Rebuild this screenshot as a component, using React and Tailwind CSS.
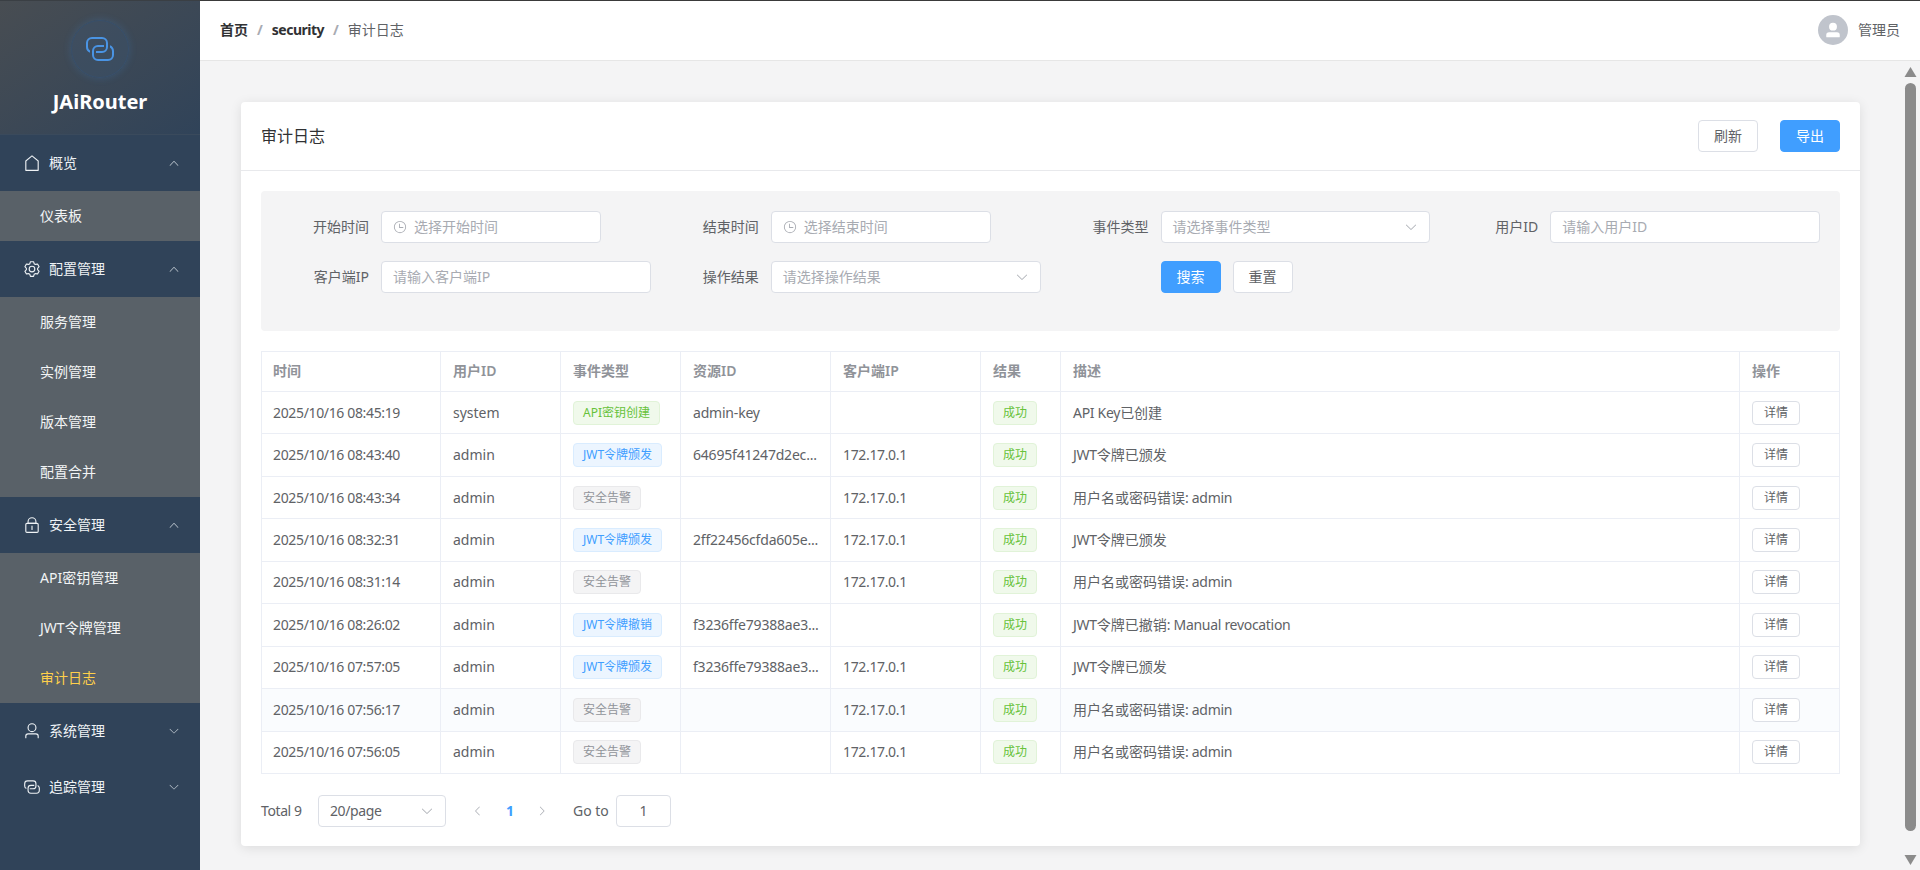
const icons = {
  house: ["M192 413.952V896h640V413.952L512 147.328zM139.52 374.4l352-293.312a32 32 0 0 1 40.96 0l352 293.312A32 32 0 0 1 896 398.976V928a32 32 0 0 1-32 32H160a32 32 0 0 1-32-32V398.976a32 32 0 0 1 11.52-24.576"],
  setting: ["M600.704 64a32 32 0 0 1 30.464 22.208l35.2 109.376c14.784 7.232 28.928 15.36 42.432 24.512l112.384-24.192a32 32 0 0 1 34.432 15.36L944.32 364.8a32 32 0 0 1-4.032 37.504l-77.12 85.12a357 357 0 0 1 0 49.024l77.12 85.248a32 32 0 0 1 4.032 37.504l-88.704 153.6a32 32 0 0 1-34.432 15.296L708.8 803.904c-13.44 9.088-27.648 17.28-42.368 24.512l-35.264 109.376A32 32 0 0 1 600.704 960H423.296a32 32 0 0 1-30.464-22.208L357.696 828.48a352 352 0 0 1-42.56-24.64l-112.32 24.256a32 32 0 0 1-34.432-15.36L79.68 659.2a32 32 0 0 1 4.032-37.504l77.12-85.248a357 357 0 0 1 0-48.896l-77.12-85.248A32 32 0 0 1 79.68 364.8l88.704-153.6a32 32 0 0 1 34.432-15.296l112.32 24.256c13.568-9.152 27.776-17.408 42.56-24.64l35.2-109.312A32 32 0 0 1 423.232 64H600.64zm-23.424 64H446.72l-36.352 113.088-24.512 11.968a294 294 0 0 0-34.816 20.096l-22.656 15.36-116.224-25.088-65.28 113.152 79.68 88.192-1.92 27.136a293 293 0 0 0 0 40.192l1.92 27.136-79.808 88.192 65.344 113.152 116.224-25.024 22.656 15.296a294 294 0 0 0 34.816 20.096l24.512 11.968L446.72 896h130.688l36.48-113.152 24.448-11.904a288 288 0 0 0 34.752-20.096l22.592-15.296 116.288 25.024 65.28-113.152-79.744-88.192 1.92-27.136a293 293 0 0 0 0-40.256l-1.92-27.136 79.808-88.128-65.344-113.152-116.288 24.96-22.592-15.232a288 288 0 0 0-34.752-20.096l-24.448-11.904L577.344 128zM512 320a192 192 0 1 1 0 384 192 192 0 0 1 0-384m0 64a128 128 0 1 0 0 256 128 128 0 0 0 0-256"],
  lock: [
    "M224 448a32 32 0 0 0-32 32v384a32 32 0 0 0 32 32h576a32 32 0 0 0 32-32V480a32 32 0 0 0-32-32zm0-64h576a96 96 0 0 1 96 96v384a96 96 0 0 1-96 96H224a96 96 0 0 1-96-96V480a96 96 0 0 1 96-96",
    "M512 544a32 32 0 0 1 32 32v192a32 32 0 1 1-64 0V576a32 32 0 0 1 32-32m192-160v-64a192 192 0 1 0-384 0v64zM512 64a256 256 0 0 1 256 256v128H256V320A256 256 0 0 1 512 64",
  ],
  user: ["M512 512a192 192 0 1 0 0-384 192 192 0 0 0 0 384m0 64a256 256 0 1 1 0-512 256 256 0 0 1 0 512m320 320v-96a96 96 0 0 0-96-96H288a96 96 0 0 0-96 96v96a32 32 0 1 1-64 0v-96a160 160 0 0 1 160-160h448a160 160 0 0 1 160 160v96a32 32 0 1 1-64 0"],
  userFilled: ["M288 320a224 224 0 1 0 448 0 224 224 0 1 0-448 0m544 608H160a32 32 0 0 1-32-32v-96a160 160 0 0 1 160-160h448a160 160 0 0 1 160 160v96a32 32 0 0 1-32 32z"],
  connection: [
    "M640 384v64H448a128 128 0 0 0-128 128v128a128 128 0 0 0 128 128h320a128 128 0 0 0 128-128V576a128 128 0 0 0-64-110.848V394.88c74.56 26.368 128 97.472 128 181.056v128a192 192 0 0 1-192 192H448a192 192 0 0 1-192-192V576a192 192 0 0 1 192-192z",
    "M384 640v-64h192a128 128 0 0 0 128-128V320a128 128 0 0 0-128-128H256a128 128 0 0 0-128 128v128a128 128 0 0 0 64 110.848v70.272A192.064 192.064 0 0 1 64 448V320a192 192 0 0 1 192-192h320a192 192 0 0 1 192 192v128a192 192 0 0 1-192 192z",
  ],
  clock: [
    "M512 896a384 384 0 1 0 0-768 384 384 0 0 0 0 768m0 64a448 448 0 1 1 0-896 448 448 0 0 1 0 896",
    "M480 256a32 32 0 0 1 32 32v256a32 32 0 0 1-64 0V288a32 32 0 0 1 32-32",
    "M480 512h256q32 0 32 32t-32 32H480q-32 0-32-32t32-32",
  ],
  arrowDown: ["M831.872 340.864 512 652.672 192.128 340.864a30.59 30.59 0 0 0-42.752 0 29.12 29.12 0 0 0 0 41.6L489.664 714.24a32 32 0 0 0 44.672 0l340.288-331.712a29.12 29.12 0 0 0 0-41.728 30.59 30.59 0 0 0-42.752 0z"],
  arrowUp: ["m488.832 344.32-339.84 356.672a32 32 0 0 0 0 44.16l.384.384a29.44 29.44 0 0 0 42.688 0l320-335.872 319.872 335.872a29.44 29.44 0 0 0 42.688 0l.384-.384a32 32 0 0 0 0-44.16L535.168 344.32a32 32 0 0 0-46.336 0"],
  arrowLeft: ["M609.408 149.376 277.76 489.6a32 32 0 0 0 0 44.672l331.648 340.352a29.12 29.12 0 0 0 41.728 0 30.59 30.59 0 0 0 0-42.752L339.264 511.936l311.872-319.872a30.59 30.59 0 0 0 0-42.688 29.12 29.12 0 0 0-41.728 0z"],
  arrowRight: ["M340.864 149.312a30.59 30.59 0 0 0 0 42.752L652.736 512 340.864 831.872a30.59 30.59 0 0 0 0 42.688 29.12 29.12 0 0 0 41.728 0L714.24 534.336a32 32 0 0 0 0-44.672L382.592 149.376a29.12 29.12 0 0 0-41.728 0z"],
};

const Icon = ({ name, className }) => (
  <svg viewBox="0 0 1024 1024" fill="currentColor" className={className}>
    {icons[name].map((d) => (
      <path key={d} d={d} />
    ))}
  </svg>
);

const menu = [
  { icon: "house", label: "概览", open: true, items: ["仪表板"] },
  { icon: "setting", label: "配置管理", open: true, items: ["服务管理", "实例管理", "版本管理", "配置合并"] },
  { icon: "lock", label: "安全管理", open: true, items: ["API密钥管理", "JWT令牌管理", "审计日志"] },
  { icon: "user", label: "系统管理", open: false, items: [] },
  { icon: "connection", label: "追踪管理", open: false, items: [] },
];

const tagStyles = {
  green: "bg-[#f0f9eb] border-[#e1f3d8] text-[#67c23a]",
  blue: "bg-[#ecf5ff] border-[#d9ecff] text-[#409eff]",
  gray: "bg-[#f4f4f5] border-[#e9e9eb] text-[#909399]",
};

const logs = [
  { time: "2025/10/16 08:45:19", user: "system", tag: "API密钥创建", color: "green", res: "admin-key", ip: "", desc: "API Key已创建" },
  { time: "2025/10/16 08:43:40", user: "admin", tag: "JWT令牌颁发", color: "blue", res: "64695f41247d2ec...", ip: "172.17.0.1", desc: "JWT令牌已颁发" },
  { time: "2025/10/16 08:43:34", user: "admin", tag: "安全告警", color: "gray", res: "", ip: "172.17.0.1", desc: "用户名或密码错误: admin" },
  { time: "2025/10/16 08:32:31", user: "admin", tag: "JWT令牌颁发", color: "blue", res: "2ff22456cfda605e...", ip: "172.17.0.1", desc: "JWT令牌已颁发" },
  { time: "2025/10/16 08:31:14", user: "admin", tag: "安全告警", color: "gray", res: "", ip: "172.17.0.1", desc: "用户名或密码错误: admin" },
  { time: "2025/10/16 08:26:02", user: "admin", tag: "JWT令牌撤销", color: "blue", res: "f3236ffe79388ae3...", ip: "", desc: "JWT令牌已撤销: Manual revocation" },
  { time: "2025/10/16 07:57:05", user: "admin", tag: "JWT令牌颁发", color: "blue", res: "f3236ffe79388ae3...", ip: "172.17.0.1", desc: "JWT令牌已颁发" },
  { time: "2025/10/16 07:56:17", user: "admin", tag: "安全告警", color: "gray", res: "", ip: "172.17.0.1", desc: "用户名或密码错误: admin", hover: true },
  { time: "2025/10/16 07:56:05", user: "admin", tag: "安全告警", color: "gray", res: "", ip: "172.17.0.1", desc: "用户名或密码错误: admin" },
];

const headers = ["时间", "用户ID", "事件类型", "资源ID", "客户端IP", "结果", "描述", "操作"];

// latin runs come out wider than in the reference, so only those get tightened
const Desc = ({ text }) =>
  text.split(/([\u4e00-\u9fff]+)/).map((part, i) =>
    i % 2 ? (
      <span key={i}>{part}</span>
    ) : (
      <span key={i} className="tracking-[-0.3px]">
        {part}
      </span>
    )
  );

const Tag = ({ color, children }) => (
  <span className={`inline-flex h-6 items-center rounded border px-[9px] text-xs align-middle ${tagStyles[color]}`}>{children}</span>
);

const Sidebar = () => (
  <aside className="flex w-[200px] shrink-0 flex-col bg-[#304359]">
    <div className="flex h-[135px] shrink-0 flex-col items-center border-b border-[#3a4a5c] bg-gradient-to-br from-[#484d52] to-[#304359] pt-[20px] shadow-[inset_0_1px_0_#3a3f44]">
      <div className="flex h-[58px] w-[58px] items-center justify-center rounded-full border border-[#38506c] bg-[#3a5a7e]/25 shadow-[0_0_8px_rgba(64,158,255,0.18)]">
        <Icon name="connection" className="h-8 w-8 text-[#4a94e4]" />
      </div>
      <div className="mt-[9px] text-xl leading-[30px] font-bold text-white">JAiRouter</div>
    </div>
    {menu.map((group) => (
      <div key={group.label}>
        <div className="flex h-14 items-center pr-5 pl-[23px] text-sm text-[#eef2f5]">
          <Icon name={group.icon} className="h-[18px] w-[18px]" />
          <span className="ml-2 flex-1">{group.label}</span>
          <Icon name={group.open ? "arrowUp" : "arrowDown"} className="h-3 w-3 text-[#bfc8d0]" />
        </div>
        {group.items.map((item) => (
          <div
            key={item}
            className={`flex h-[50px] items-center bg-[#596168] pl-10 text-sm ${item === "审计日志" ? "text-[#ffd04b]" : "text-[#f2f4f5]"}`}
          >
            {item}
          </div>
        ))}
      </div>
    ))}
  </aside>
);

const Header = () => (
  <header className="flex h-[61px] shrink-0 items-center justify-between border-b border-[#e6e6e6] bg-white px-5 text-sm shadow-[inset_0_1px_0_#3a3a3a]">
    <div className="flex items-center">
      <span className="font-bold text-[#303133]">首页</span>
      <span className="mx-[9px] font-bold text-[#a8abb2]">/</span>
      <span className="font-bold tracking-[-0.5px] text-[#303133]">security</span>
      <span className="mx-[9px] font-bold text-[#a8abb2]">/</span>
      <span className="text-[#606266]">审计日志</span>
    </div>
    <div className="flex items-center text-[#606266]">
      <div className="flex h-[30px] w-[30px] items-center justify-center rounded-full bg-[#c0c4cc] text-white">
        <Icon name="userFilled" className="h-[18px] w-[18px]" />
      </div>
      <span className="ml-[10px] text-sm">管理员</span>
    </div>
  </header>
);

const FormItem = ({ label, children }) => (
  <div className="flex h-8 items-center">
    <label className="w-[100px] shrink-0 pr-3 text-right text-sm text-[#606266]">{label}</label>
    {children}
  </div>
);

const Input = ({ placeholder, width = "w-full", icon, select }) => (
  <div className={`flex h-8 items-center rounded border border-[#dcdfe6] bg-white px-[11px] text-sm text-[#a8abb2] ${width}`}>
    {icon && <Icon name="clock" className="mr-[7px] h-[14px] w-[14px] text-[#a8abb2]" />}
    <span className="flex-1">{placeholder}</span>
    {select && <Icon name="arrowDown" className="h-[14px] w-[14px] text-[#a8abb2]" />}
  </div>
);

const Btn = ({ primary, children }) => (
  <button
    className={`h-8 w-[60px] rounded border text-sm ${primary ? "border-[#409eff] bg-[#409eff] text-white" : "border-[#dcdfe6] bg-white text-[#606266]"}`}
  >
    {children}
  </button>
);

const Filters = () => (
  <div className="rounded bg-[#f4f4f5] p-5 pb-[38px]">
    <div className="grid grid-cols-4 gap-x-5 gap-y-[18px]">
      <FormItem label="开始时间">
        <Input placeholder="选择开始时间" icon width="w-[220px]" />
      </FormItem>
      <FormItem label="结束时间">
        <Input placeholder="选择结束时间" icon width="w-[220px]" />
      </FormItem>
      <FormItem label="事件类型">
        <Input placeholder="请选择事件类型" select />
      </FormItem>
      <FormItem label="用户ID">
        <Input placeholder="请输入用户ID" />
      </FormItem>
      <FormItem label="客户端IP">
        <Input placeholder="请输入客户端IP" />
      </FormItem>
      <FormItem label="操作结果">
        <Input placeholder="请选择操作结果" select />
      </FormItem>
      <div className="flex h-8 gap-3 pl-[100px]">
        <Btn primary>搜索</Btn>
        <Btn>重置</Btn>
      </div>
    </div>
  </div>
);

const LogTable = () => (
  <table className="mt-5 w-full table-fixed border-collapse text-sm text-[#606266]">
    <colgroup>
      <col className="w-[179px]" />
      <col className="w-[120px]" />
      <col className="w-[120px]" />
      <col className="w-[150px]" />
      <col className="w-[150px]" />
      <col className="w-[80px]" />
      <col />
      <col className="w-[100px]" />
    </colgroup>
    <thead>
      <tr className="h-10">
        {headers.map((h) => (
          <th key={h} className="border border-[#ebeef5] px-3 pb-[2px] text-left font-semibold text-[#909399] first:pl-[11px]">
            {h}
          </th>
        ))}
      </tr>
    </thead>
    <tbody>
      {logs.map((row) => (
        <tr key={row.time} className={`h-[42.44px] ${row.hover ? "bg-[#fafcfe]" : ""}`}>
          <td className="border border-[#ebeef5] pr-3 pl-[11px] tracking-[-0.35px]">{row.time}</td>
          <td className="border border-[#ebeef5] px-3">{row.user}</td>
          <td className="border border-[#ebeef5] px-3">
            <Tag color={row.color}>{row.tag}</Tag>
          </td>
          <td className="border border-[#ebeef5] px-3 tracking-[-0.2px] whitespace-nowrap">{row.res}</td>
          <td className="border border-[#ebeef5] px-3 tracking-[-0.35px]">{row.ip}</td>
          <td className="border border-[#ebeef5] px-3">
            <Tag color="green">成功</Tag>
          </td>
          <td className="border border-[#ebeef5] px-3">
            <Desc text={row.desc} />
          </td>
          <td className="border border-[#ebeef5] px-3">
            <button className="h-6 w-12 rounded border border-[#dcdfe6] bg-white align-middle text-xs text-[#606266]">详情</button>
          </td>
        </tr>
      ))}
    </tbody>
  </table>
);

const Pagination = () => (
  <div className="mt-[21px] flex h-8 items-center text-sm text-[#606266]">
    <span className="w-[57px] tracking-[-0.4px]">Total 9</span>
    <div className="flex h-8 w-[128px] items-center rounded border border-[#dcdfe6] px-[11px]">
      <span className="flex-1 tracking-[-0.4px]">20/page</span>
      <Icon name="arrowDown" className="h-[14px] w-[14px] text-[#a8abb2]" />
    </div>
    <Icon name="arrowLeft" className="ml-[26px] h-3 w-3 text-[#a8abb2]" />
    <span className="w-[52px] text-center font-bold text-[#409eff]">1</span>
    <Icon name="arrowRight" className="h-3 w-3 text-[#a8abb2]" />
    <span className="ml-[25px] w-[43px]">Go to</span>
    <div className="flex h-8 w-[55px] items-center justify-center rounded border border-[#dcdfe6]">1</div>
  </div>
);

const Scrollbar = () => (
  <div className="flex w-[19px] shrink-0 flex-col items-center bg-[#f4f4f5] pt-[6px]">
    <svg viewBox="0 0 12 10" className="h-[10px] w-[13px] fill-[#8b8b8b]">
      <path d="M6 0 12 10H0z" />
    </svg>
    <div className="mt-[6px] h-[748px] w-[11px] rounded-full bg-[#8b8b8b]" />
    <svg viewBox="0 0 12 10" className="mt-[24px] h-[10px] w-[13px] fill-[#8b8b8b]">
      <path d="M0 0H12L6 10z" />
    </svg>
  </div>
);

export default function App() {
  return (
    <div className="flex h-[870px] overflow-hidden bg-[#f4f4f5] font-['Noto_Sans','Noto_Sans_CJK_SC',sans-serif]">
      <Sidebar />
      <div className="flex min-w-0 flex-1 flex-col">
        <Header />
        <div className="flex min-h-0 flex-1">
          <main className="min-w-0 flex-1 px-[41px] pt-[41px]">
            <div className="h-[744px] rounded bg-white shadow-[0_2px_12px_rgba(0,0,0,0.1)]">
              <div className="flex h-[69px] items-center justify-between border-b border-[#e8e9ec] px-5 pb-px">
                <span className="text-base text-[#303133]">审计日志</span>
                <div className="flex gap-[22px]">
                  <Btn>刷新</Btn>
                  <Btn primary>导出</Btn>
                </div>
              </div>
              <div className="p-5">
                <Filters />
                <LogTable />
                <Pagination />
              </div>
            </div>
          </main>
          <Scrollbar />
        </div>
      </div>
    </div>
  );
}
